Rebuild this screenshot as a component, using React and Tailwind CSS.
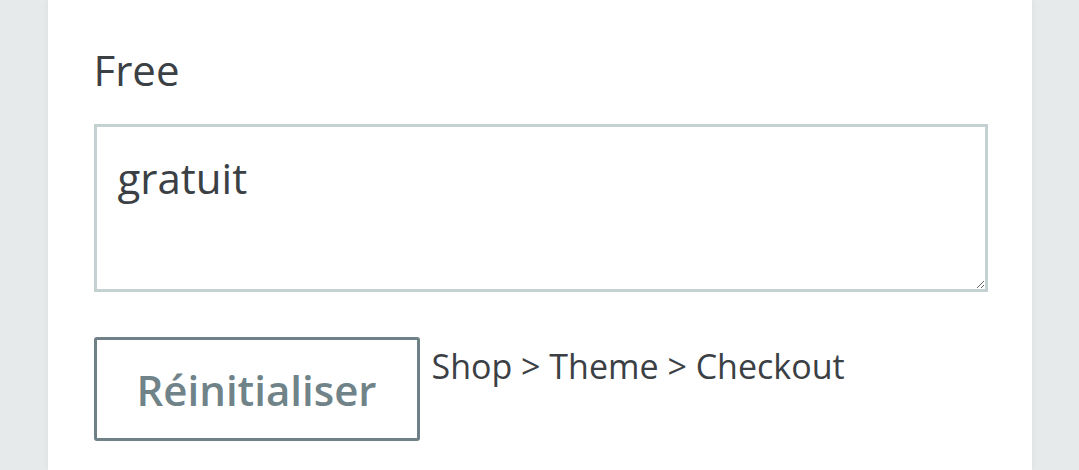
import React from 'react';

function App() {
    return (
        <div className="min-h-screen w-full bg-[#e7eaeb] flex justify-center" style={{ fontFamily: '"Open Sans", sans-serif' }}>
            <div className="w-[984px] min-h-[470px] bg-white px-[46px] pt-[41px] shadow-[0_0_6px_rgba(0,0,0,0.06)]">
                <label className="block text-[42px] leading-[58px] text-[#3b4045]">Free</label>
                <textarea
                    defaultValue="gratuit"
                    className="mt-[25px] block w-[894px] h-[168px] border-[3px] border-[#c3d1d3] px-[21px] py-[23px] text-[42px] leading-[56px] text-[#3b4045] outline-none"
                />
                <div className="mt-[45px] flex items-start gap-[12px]">
                    <button className="w-[326px] h-[104px] border-[3px] border-[#6f8186] rounded-[3px] text-[42px] font-semibold text-[#6f8388] leading-none pt-[2px]">
                        Réinitialiser
                    </button>
                    <span className="text-[34px] leading-[58px] text-[#3b4045]">Shop &gt; Theme &gt; Checkout</span>
                </div>
            </div>
        </div>
    );
}

export default App;
